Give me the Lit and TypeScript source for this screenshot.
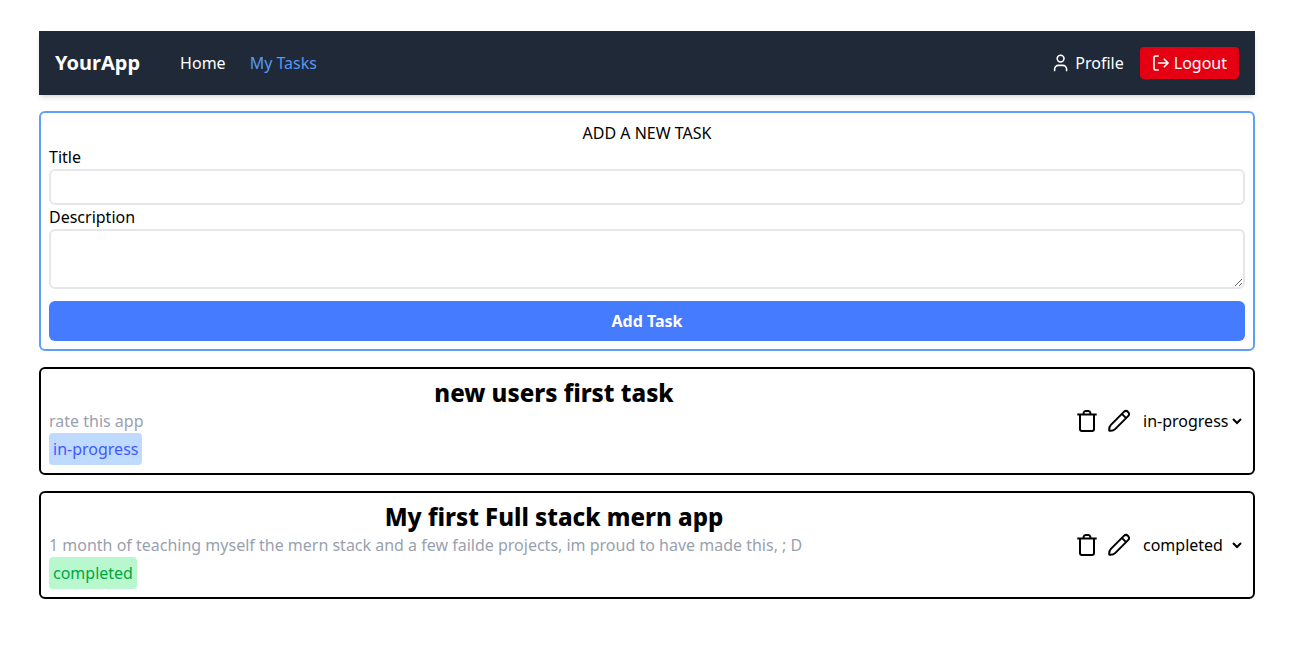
import { LitElement, html, css } from "lit";
import { customElement, property, state } from "lit/decorators.js";

type Status = "pending" | "in-progress" | "completed";
interface Task {
  id: number;
  title: string;
  description: string;
  status: Status;
}

@customElement("nav-bar")
class NavBar extends LitElement {
  static styles = css`
    nav {
      display: flex;
      align-items: center;
      justify-content: space-between;
      padding: 16px;
      background: #202937;
      color: #fff;
      box-shadow: 0 4px 6px -1px rgb(0 0 0 / 0.1), 0 2px 4px -2px rgb(0 0 0 / 0.1);
    }
    .group { display: flex; align-items: center; }
    .brand { font-size: 20px; line-height: 28px; font-weight: 700; margin-right: 40px; }
    .links { gap: 24px; }
    .account { gap: 16px; }
    a { color: inherit; text-decoration: none; }
    .active { color: #5797f5; }
    .with-icon { display: flex; align-items: center; gap: 4px; }
    button {
      font: inherit;
      color: #fff;
      border: 0;
      border-radius: 4px;
      background: #e40012;
      padding: 4px 12px;
      cursor: pointer;
    }
    svg { width: 18px; height: 18px; fill: none; stroke: currentColor; stroke-width: 1.6; stroke-linecap: round; stroke-linejoin: round; }
  `;
  render() {
    return html`<nav>
      <div class="group">
        <a class="brand" href="#">YourApp</a>
        <div class="group links">
          <a href="#home">Home</a>
          <a class="active" href="#tasks" aria-current="page">My Tasks</a>
        </div>
      </div>
      <div class="group account">
        <a class="with-icon" href="#profile">
          <svg viewBox="0 0 18 18" aria-hidden="true">
            <circle cx="7.6" cy="4.6" r="3.4" />
            <path d="M1.6 16.6v-1.400a3.800 3.800 0 0 1 3.800-3.800h4.400a3.800 3.800 0 0 1 3.800 3.800v1.400" />
          </svg>Profile</a>
        <button class="with-icon" type="button">
          <svg viewBox="0 0 18 18" aria-hidden="true">
            <path d="M6.2 2H3.500a1.500 1.500 0 0 0-1.500 1.500v11A1.500 1.500 0 0 0 3.500 16h2.700M6.500 9H16M12.300 5.200 16.100 9l-3.800 3.800" />
          </svg>Logout</button>
      </div>
    </nav>`;
  }
}

@customElement("task-form")
class TaskForm extends LitElement {
  static styles = css`
    form {
      display: flex;
      flex-direction: column;
      padding: 8px;
      border: 2px solid #5e9ffb;
      border-radius: 6px;
    }
    h2 { margin: 0; font-size: 16px; line-height: 24px; font-weight: 400; text-align: center; }
    input, textarea {
      box-sizing: border-box;
      width: 100%;
      font: inherit;
      border: 2px solid #e5e7eb;
      border-radius: 6px;
      padding: 4px;
      background: #fff;
    }
    input { height: 36px; }
    textarea { display: block; height: 60px; resize: vertical; }
    button {
      margin-top: 12px;
      padding: 8px;
      border: 0;
      border-radius: 6px;
      background: #457bff;
      color: #fff;
      font: inherit;
      font-weight: 700;
      cursor: pointer;
    }
  `;
  render() {
    return html`<form @submit=${(e: Event) => e.preventDefault()}>
      <h2>ADD A NEW TASK</h2>
      <label for="title">Title</label>
      <input id="title" type="text" name="title" />
      <label for="description">Description</label>
      <textarea id="description" name="description"></textarea>
      <button type="submit">Add Task</button>
    </form>`;
  }
}

@customElement("task-card")
class TaskCard extends LitElement {
  @property({ attribute: false }) task!: Task;

  static styles = css`
    article {
      display: flex;
      align-items: center;
      justify-content: space-between;
      gap: 16px;
      padding: 8px;
      border: 2px solid #000;
      border-radius: 6px;
    }
    .body { flex: 1; }
    h3 { margin: 0; font-size: 24px; line-height: 32px; font-weight: 800; text-align: center; }
    p { margin: 0; color: #99a1af; }
    .badge { display: block; width: fit-content; padding: 4px; border-radius: 4px; }
    .in-progress { background: #bedbff; color: #4358ff; }
    .completed { background: #b9f8cf; color: #00a63e; }
    .actions { display: flex; align-items: center; gap: 8px; }
    button { display: flex; padding: 0; border: 0; background: none; color: inherit; cursor: pointer; }
    svg { width: 24px; height: 24px; fill: none; stroke: currentColor; stroke-width: 2; stroke-linejoin: round; }
    select { font: inherit; color: inherit; border: 0; padding: 0; background: transparent; }
  `;
  render() {
    const { title, description, status } = this.task;
    const options: Status[] = ["pending", "in-progress", "completed"];
    return html`<article>
      <div class="body">
        <h3>${title}</h3>
        <p>${description}</p>
        <span class="badge ${status}">${status}</span>
      </div>
      <div class="actions">
        <button type="button" aria-label="Delete task">
          <svg viewBox="0 0 24 24"><path d="M2.3 5.500h19.400M5 5.500V20a2 2 0 0 0 2 2h10a2 2 0 0 0 2-2V5.500M8.300 5.500l.400-1.900A2 2 0 0 1 10.600 2h2.800a2 2 0 0 1 1.900 1.600l.400 1.900" /></svg>
        </button>
        <button type="button" aria-label="Edit task">
          <svg viewBox="0 0 24 24"><path d="M2.300 21.700c-.300-2.600.200-4.400 1.600-5.800l13-13a2.970 2.970 0 0 1 4.200 4.200l-13 13c-1.400 1.400-3.200 1.900-5.800 1.600zM14.900 4.900l4.200 4.200" /></svg>
        </button>
        <select aria-label="Task status">
          ${options.map((o) => html`<option value=${o} ?selected=${o === status}>${o}</option>`)}
        </select>
      </div>
    </article>`;
  }
}

@customElement("app-root")
class AppRoot extends LitElement {
  @state() private tasks: Task[] = [
    { id: 1, title: "new users first task", description: "rate this app", status: "in-progress" },
    {
      id: 2,
      title: "My first Full stack mern app",
      description: "1 month of teaching myself the mern stack and a few failde projects, im proud to have made this, ; D",
      status: "completed",
    },
  ];

  static styles = css`
    :host {
      display: block;
      background: #fff;
      color: #000;
      font: 16px/24px "Noto Sans", sans-serif;
    }
    main {
      display: flex;
      flex-direction: column;
      gap: 16px;
      padding: 31px 56px 31px 39px;
    }
  `;
  render() {
    return html`<main>
      <nav-bar></nav-bar>
      <task-form></task-form>
      ${this.tasks.map((t) => html`<task-card .task=${t}></task-card>`)}
    </main>`;
  }
}
